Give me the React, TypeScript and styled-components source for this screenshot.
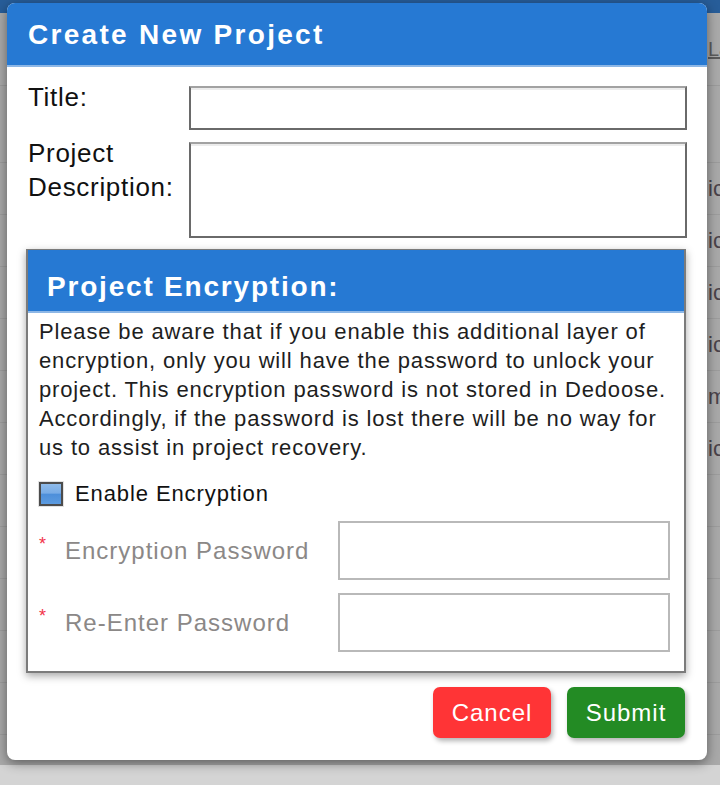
import React from "react";
import styled, { createGlobalStyle } from "styled-components";

const GlobalStyle = createGlobalStyle`
  html, body {
    margin: 0;
    padding: 0;
    background: #d4d4d4;
  }
  body {
    font-family: "Liberation Sans", Arial, sans-serif;
  }
  * {
    box-sizing: border-box;
  }
`;

const Page = styled.div`
  position: relative;
  width: 720px;
  height: 785px;
  overflow: hidden;
`;

/* the app behind the modal, greyed out by the overlay */
const Backdrop = styled.div`
  display: flex;
  flex-direction: column;
  height: 785px;
  background: #d4d4d4;
`;

const BackTopBar = styled.div`
  height: 13px;
  background: #275d99;
`;

const BackHead = styled.div`
  height: 73px;
  display: flex;
  align-items: center;
  padding-left: 708px;
  background: #aaaaaa;
  border-bottom: 1px solid #9c9c9c;
  font-size: 20px;
  color: #5c5c5c;
  text-decoration: underline;
`;

const BackTools = styled.div`
  height: 77px;
  background: #a9a9a9;
  border-bottom: 1px solid #9c9c9c;
`;

const BackRows = styled.div`
  height: 602px;
  overflow: hidden;
  background: #a9a9a9;
`;

const BackRow = styled.div`
  height: 52px;
  display: flex;
  align-items: center;
  padding-left: 708px;
  border-bottom: 1px solid #9d9d9d;
  font-size: 22px;
  color: #4a424a;
`;

const Dialog = styled.div`
  position: absolute;
  top: 3px;
  left: 7px;
  width: 700px;
  height: 757px;
  display: flex;
  flex-direction: column;
  background: #fff;
  border-radius: 8px;
  box-shadow: 0 3px 12px rgba(0, 0, 0, 0.45);
  overflow: hidden;
`;

const Header = styled.div<{ $inset: boolean }>`
  background: #2679d3;
  border-bottom: 2px solid #8db7e6;
  padding: ${(p) => (p.$inset ? "21px 19px 8px" : "16px 21px 14px")};
  color: #fff;
  font-size: 28px;
  font-weight: 700;
  line-height: 32px;
  letter-spacing: ${(p) => (p.$inset ? "1.8px" : "2.3px")};
  white-space: nowrap;
`;

const Body = styled.div`
  padding: 13px 20px 0 21px;
  display: flex;
  flex-direction: column;
  gap: 6px;
`;

const FieldRow = styled.div`
  display: grid;
  grid-template-columns: 161px 1fr;
  align-items: start;
`;

const FieldLabel = styled.label`
  font-size: 26px;
  line-height: 34px;
  letter-spacing: 0.7px;
  color: #111;
`;

const TextBox = styled.div<{ $tall?: boolean }>`
  margin-top: 6px;
  height: ${(p) => (p.$tall ? "96px" : "44px")};
  border: 2px solid #6a6a6a;
  border-top-color: #a2a2a2;
  box-shadow: inset 0 2px 0 #ececec;
  background: #fff;
`;

const Panel = styled.section`
  margin: 5px 1px 0 -2px;
  border: 2px solid #7b7b7b;
  border-top-width: 1px;
  box-shadow: 0 3px 8px rgba(0, 0, 0, 0.35);
  padding-bottom: 19px;
`;

const Notice = styled.p`
  margin: 4px 0 0;
  padding: 0 11px;
  font-size: 22px;
  line-height: 29px;
  letter-spacing: 0.85px;
  color: #1e1e1e;
`;

const CheckRow = styled.label`
  margin: 19px 0 0 11px;
  display: flex;
  align-items: center;
  gap: 12px;
  font-size: 22px;
  letter-spacing: 0.9px;
  color: #111;
`;

const CheckBox = styled.span`
  width: 24px;
  height: 24px;
  border: 2px solid #4c4c4c;
  box-shadow: 0 0 0 1px #e2e2e2;
  background: linear-gradient(#8fbbea 0%, #78ace6 45%, #4d8fda 52%, #5c9be0 100%);
`;

const PassRow = styled.div<{ $first?: boolean }>`
  margin: ${(p) => (p.$first ? "14px" : "13px")} 14px 0 11px;
  display: flex;
  align-items: center;
`;

const Star = styled.span`
  width: 26px;
  padding-bottom: 14px;
  color: #f2334a;
  font-size: 18px;
  line-height: 1;
`;

const PassLabel = styled.span`
  flex: 1;
  font-size: 24px;
  letter-spacing: 1px;
  color: #8b8887;
`;

const PassInput = styled.div`
  width: 332px;
  height: 59px;
  border: 2px solid #b9b9b9;
  background: #fff;
`;

const Footer = styled.div`
  margin-top: auto;
  padding: 0 22px 22px 0;
  display: flex;
  justify-content: flex-end;
  gap: 16px;
`;

const Button = styled.button<{ $tone: "cancel" | "submit" }>`
  width: 118px;
  height: 51px;
  border: none;
  border-radius: 7px;
  background: ${(p) => (p.$tone === "cancel" ? "#ff3436" : "#238b24")};
  color: #fff;
  font-family: "Liberation Sans", Arial, sans-serif;
  font-size: 24px;
  letter-spacing: 1px;
  box-shadow: 2px 3px 5px rgba(0, 0, 0, 0.3);
  cursor: pointer;
`;

const rowBits = ["ic", "ic", "ic", "ic", "m", "ic", "", "", "", "", "", ""];

export default function App() {
  return (
    <Page>
      <GlobalStyle />
      <Backdrop>
        <BackTopBar />
        <BackHead>La</BackHead>
        <BackTools />
        <BackRows>
          {rowBits.map((bit, i) => (
            <BackRow key={i}>{bit}</BackRow>
          ))}
        </BackRows>
      </Backdrop>

      <Dialog>
        <Header $inset={false}>Create New Project</Header>
        <Body>
          <FieldRow>
            <FieldLabel>Title:</FieldLabel>
            <TextBox />
          </FieldRow>
          <FieldRow>
            <FieldLabel>
              Project
              <br />
              Description:
            </FieldLabel>
            <TextBox $tall />
          </FieldRow>

          <Panel>
            <Header $inset>Project Encryption:</Header>
            <Notice>
              Please be aware that if you enable this additional layer of encryption, only you will have the
              password to unlock your project. This encryption password is not stored in Dedoose. Accordingly, if
              the password is lost there will be no way for us to assist in project recovery.
            </Notice>
            <CheckRow>
              <CheckBox />
              Enable Encryption
            </CheckRow>
            <PassRow $first>
              <Star>*</Star>
              <PassLabel>Encryption Password</PassLabel>
              <PassInput />
            </PassRow>
            <PassRow>
              <Star>*</Star>
              <PassLabel>Re-Enter Password</PassLabel>
              <PassInput />
            </PassRow>
          </Panel>
        </Body>
        <Footer>
          <Button $tone="cancel">Cancel</Button>
          <Button $tone="submit">Submit</Button>
        </Footer>
      </Dialog>
    </Page>
  );
}
